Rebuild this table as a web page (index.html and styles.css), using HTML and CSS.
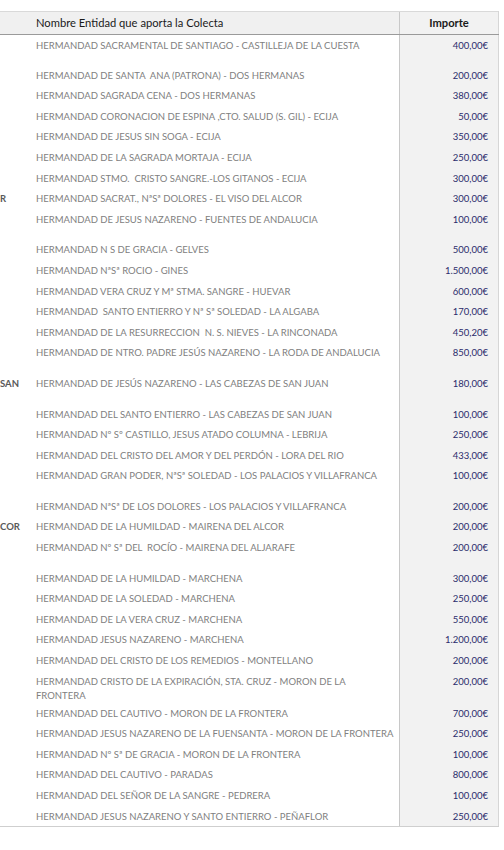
FILE: index.html
```html
<!DOCTYPE html>
<html lang="es">
<head>
    <meta charset="UTF-8">
    <meta name="viewport" content="width=device-width, initial-scale=1.0">
    <title>Colecta - Hermandades</title>
    <link rel="stylesheet" href="styles.css">
</head>
<body>
    <div class="sheet">
        <table class="colecta">
            <colgroup>
                <col class="col-loc">
                <col class="col-name">
                <col class="col-amount">
            </colgroup>
            <thead>
                <tr>
                    <th class="loc"></th>
                    <th class="name">Nombre Entidad que aporta la Colecta</th>
                    <th class="amount">Importe</th>
                </tr>
            </thead>
            <tbody>
                <tr class="tall"><td class="loc"></td><td class="name">HERMANDAD SACRAMENTAL DE SANTIAGO - CASTILLEJA DE LA CUESTA</td><td class="amount">400,00€</td></tr>
                <tr><td class="loc"></td><td class="name">HERMANDAD DE SANTA &nbsp;ANA (PATRONA) - DOS HERMANAS</td><td class="amount">200,00€</td></tr>
                <tr><td class="loc"></td><td class="name">HERMANDAD SAGRADA CENA - DOS HERMANAS</td><td class="amount">380,00€</td></tr>
                <tr><td class="loc"></td><td class="name">HERMANDAD CORONACION DE ESPINA ,CTO. SALUD (S. GIL) - ECIJA</td><td class="amount">50,00€</td></tr>
                <tr><td class="loc"></td><td class="name">HERMANDAD DE JESUS SIN SOGA - ECIJA</td><td class="amount">350,00€</td></tr>
                <tr><td class="loc"></td><td class="name">HERMANDAD DE LA SAGRADA MORTAJA - ECIJA</td><td class="amount">250,00€</td></tr>
                <tr><td class="loc"></td><td class="name">HERMANDAD STMO. &nbsp;CRISTO SANGRE.-LOS GITANOS - ECIJA</td><td class="amount">300,00€</td></tr>
                <tr><td class="loc">R</td><td class="name">HERMANDAD SACRAT., NªSª DOLORES - EL VISO DEL ALCOR</td><td class="amount">300,00€</td></tr>
                <tr class="tall"><td class="loc"></td><td class="name">HERMANDAD DE JESUS NAZARENO - FUENTES DE ANDALUCIA</td><td class="amount">100,00€</td></tr>
                <tr><td class="loc"></td><td class="name">HERMANDAD N S DE GRACIA - GELVES</td><td class="amount">500,00€</td></tr>
                <tr><td class="loc"></td><td class="name">HERMANDAD NªSª ROCIO - GINES</td><td class="amount">1.500,00€</td></tr>
                <tr><td class="loc"></td><td class="name">HERMANDAD VERA CRUZ Y Mª STMA. SANGRE - HUEVAR</td><td class="amount">600,00€</td></tr>
                <tr><td class="loc"></td><td class="name">HERMANDAD &nbsp;SANTO ENTIERRO Y Nª Sª SOLEDAD - LA ALGABA</td><td class="amount">170,00€</td></tr>
                <tr><td class="loc"></td><td class="name">HERMANDAD DE LA RESURRECCION &nbsp;N. S. NIEVES - LA RINCONADA</td><td class="amount">450,20€</td></tr>
                <tr class="tall"><td class="loc"></td><td class="name">HERMANDAD DE NTRO. PADRE JESÚS NAZARENO - LA RODA DE ANDALUCIA</td><td class="amount">850,00€</td></tr>
                <tr class="tall"><td class="loc">SAN</td><td class="name">HERMANDAD DE JESÚS NAZARENO - LAS CABEZAS DE SAN JUAN</td><td class="amount">180,00€</td></tr>
                <tr><td class="loc"></td><td class="name">HERMANDAD DEL SANTO ENTIERRO - LAS CABEZAS DE SAN JUAN</td><td class="amount">100,00€</td></tr>
                <tr><td class="loc"></td><td class="name">HERMANDAD Nº Sº CASTILLO, JESUS ATADO COLUMNA - LEBRIJA</td><td class="amount">250,00€</td></tr>
                <tr><td class="loc"></td><td class="name">HERMANDAD DEL CRISTO DEL AMOR Y DEL PERDÓN - LORA DEL RIO</td><td class="amount">433,00€</td></tr>
                <tr class="tall"><td class="loc"></td><td class="name">HERMANDAD GRAN PODER, NªSª SOLEDAD - LOS PALACIOS Y VILLAFRANCA</td><td class="amount">100,00€</td></tr>
                <tr><td class="loc"></td><td class="name">HERMANDAD NªSª DE LOS DOLORES - LOS PALACIOS Y VILLAFRANCA</td><td class="amount">200,00€</td></tr>
                <tr><td class="loc">COR</td><td class="name">HERMANDAD DE LA HUMILDAD - MAIRENA DEL ALCOR</td><td class="amount">200,00€</td></tr>
                <tr class="tall"><td class="loc"></td><td class="name">HERMANDAD Nº Sª DEL &nbsp;ROCÍO - MAIRENA DEL ALJARAFE</td><td class="amount">200,00€</td></tr>
                <tr><td class="loc"></td><td class="name">HERMANDAD DE LA HUMILDAD - MARCHENA</td><td class="amount">300,00€</td></tr>
                <tr><td class="loc"></td><td class="name">HERMANDAD DE LA SOLEDAD - MARCHENA</td><td class="amount">250,00€</td></tr>
                <tr><td class="loc"></td><td class="name">HERMANDAD DE LA VERA CRUZ - MARCHENA</td><td class="amount">550,00€</td></tr>
                <tr><td class="loc"></td><td class="name">HERMANDAD JESUS NAZARENO - MARCHENA</td><td class="amount">1.200,00€</td></tr>
                <tr><td class="loc"></td><td class="name">HERMANDAD DEL CRISTO DE LOS REMEDIOS - MONTELLANO</td><td class="amount">200,00€</td></tr>
                <tr class="wrap"><td class="loc"></td><td class="name">HERMANDAD CRISTO DE LA EXPIRACIÓN, STA. CRUZ - MORON DE LA<br>FRONTERA</td><td class="amount">200,00€</td></tr>
                <tr><td class="loc"></td><td class="name">HERMANDAD DEL CAUTIVO - MORON DE LA FRONTERA</td><td class="amount">700,00€</td></tr>
                <tr><td class="loc"></td><td class="name">HERMANDAD JESUS NAZARENO DE LA FUENSANTA - MORON DE LA FRONTERA</td><td class="amount">250,00€</td></tr>
                <tr><td class="loc"></td><td class="name">HERMANDAD Nº Sª DE GRACIA - MORON DE LA FRONTERA</td><td class="amount">100,00€</td></tr>
                <tr><td class="loc"></td><td class="name">HERMANDAD DEL CAUTIVO - PARADAS</td><td class="amount">800,00€</td></tr>
                <tr><td class="loc"></td><td class="name">HERMANDAD DEL SEÑOR DE LA SANGRE - PEDRERA</td><td class="amount">100,00€</td></tr>
                <tr><td class="loc"></td><td class="name">HERMANDAD JESUS NAZARENO Y SANTO ENTIERRO - PEÑAFLOR</td><td class="amount">250,00€</td></tr>
            </tbody>
        </table>
    </div>
</body>
</html>
```

FILE: styles.css
```css
body {
    margin: 0;
    background-color: #ffffff;
    font-family: 'Lato', 'Open Sans', sans-serif;
}

.sheet {
    padding-top: 11px;
    width: 499px;
}

.colecta {
    width: 499px;
    border-collapse: collapse;
    table-layout: fixed;
    font-size: 9.5px;
    line-height: 14px;
}

.col-loc {
    width: 30px;
}

.col-amount {
    width: 99px;
}

/* Body cells */
.colecta td {
    vertical-align: top;
    padding: 3.5px 6px 0;
    white-space: nowrap;
}

.colecta td.loc {
    padding-left: 0;
    padding-right: 0;
    overflow: hidden;
    font-weight: bold;
    color: #5a5a5a;
}

.colecta td.name {
    color: #808080;
}

.colecta .amount {
    background-color: #f2f2f2;
    border-left: 1px solid #c8c8c8;
    border-right: 1px solid #d6d6d6;
}

.colecta td.amount {
    text-align: right;
    padding-right: 10px;
    color: #2b2b6b;
}

/* Header */
.colecta thead th {
    background-color: #f0f0f0;
    border-top: 1px solid #d9d9d9;
    border-bottom: 1px solid #9a9a9a;
    padding: 4px 6px;
    font-size: 11.2px;
    font-weight: normal;
    color: #1a1a1a;
    text-align: left;
    white-space: nowrap;
}

.colecta thead th.amount {
    font-weight: bold;
    text-align: center;
}

/* Row heights */
.colecta tbody tr {
    height: 20.6px;
}

.colecta tbody tr.tall {
    height: 30.6px;
}

.colecta tbody tr.wrap {
    height: 30.6px;
}

.colecta tbody tr.wrap td {
    padding-top: 4px;
}

.colecta tbody tr:last-child td {
    border-bottom: 1px solid #cfcfcf;
}
```
